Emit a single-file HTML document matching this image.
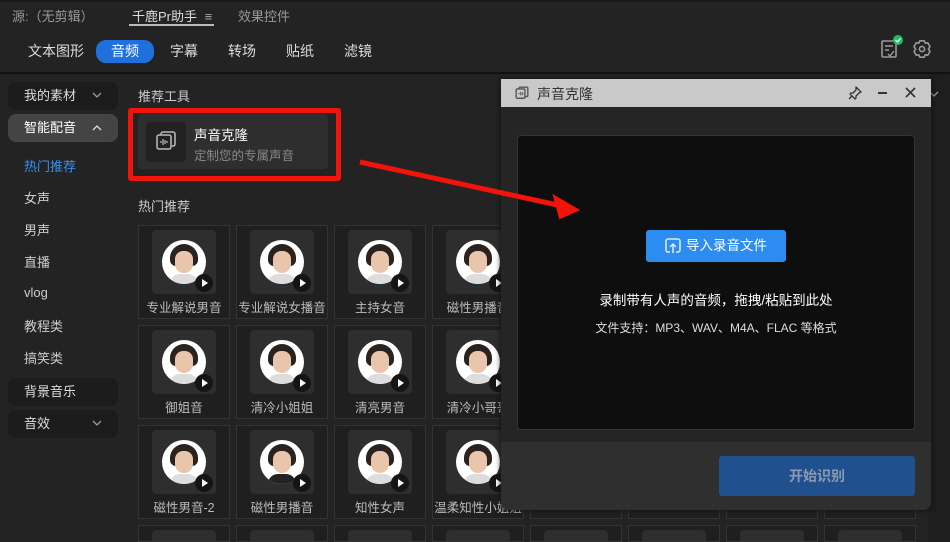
<!DOCTYPE html>
<html style="width:950px;height:542px;overflow:hidden"><head><meta charset="utf-8">
<style>
*{margin:0;padding:0;box-sizing:border-box}
body{width:950px;height:542px;background:#232323;font-family:"Liberation Sans","Noto Sans CJK SC",sans-serif;color:#ccc;position:relative;overflow:hidden;font-size:13px}
.a{position:absolute}
.tab{position:absolute;top:40px;height:23px;line-height:23px;font-size:14px;color:#ddd;text-align:center}
.side{position:absolute;left:8px;width:110px;height:28px;border-radius:8px;background:#1c1c1c;color:#ddd;font-size:13px;line-height:28px;padding-left:16px}
.side svg{position:absolute;right:16px;top:10px}
.si{position:absolute;left:24px;font-size:13px;color:#ccc}
.cell{position:absolute;width:92px;height:94px;border:1px solid #333;background:#1f1f1f}
.cell.cut{height:17px;overflow:hidden}
.cell .box{position:absolute;left:13px;top:4px;width:64px;height:64px;background:#2e2e2e;border-radius:4px}
.cell .av{position:absolute;left:10px;top:10px;width:44px;height:44px;border-radius:50%;background:#fff;overflow:hidden}
.cell .hair{position:absolute;left:8px;top:4px;width:28px;height:22px;border-radius:14px 14px 6px 6px;background:#2a221e}
.cell .face{position:absolute;left:13px;top:11px;width:18px;height:22px;border-radius:9px 9px 10px 10px;background:#e9c5ac}
.cell .body{position:absolute;left:8px;top:34px;width:28px;height:14px;border-radius:10px 10px 0 0;background:#ddd}
.cell .pl{position:absolute;left:43px;top:44px;width:18px;height:18px;border-radius:50%;background:#151515}
.cell .pl:after{content:"";position:absolute;left:7px;top:5px;border-left:6px solid #fff;border-top:4px solid transparent;border-bottom:4px solid transparent}
.cell .lb{position:absolute;left:-4px;right:-4px;top:71px;text-align:center;font-size:12.5px;color:#bbb;white-space:nowrap;overflow:hidden}
</style></head><body>
<div class="a" style="left:0;top:0;width:950px;height:2px;background:#1a1a1a"></div>
<div class="a" style="left:12px;top:6px;font-size:13px;color:#999">源:（无剪辑）</div>
<div class="a" style="left:132px;top:6px;font-size:13px;color:#ddd">千鹿Pr助手 <span style="color:#aaa;margin-left:4px">≡</span></div>
<div class="a" style="left:129px;top:24px;width:85px;height:2px;background:#bbb"></div>
<div class="a" style="left:238px;top:6px;font-size:13px;color:#999">效果控件</div>

<div class="tab" style="left:28px">文本图形</div>
<div class="tab" style="left:96px;width:58px;background:#1f6fdc;border-radius:10px;color:#fff">音频</div>
<div class="tab" style="left:170px">字幕</div>
<div class="tab" style="left:228px">转场</div>
<div class="tab" style="left:286px">贴纸</div>
<div class="tab" style="left:344px">滤镜</div>
<svg class="a" style="left:880px;top:34px" width="56" height="28" viewBox="0 0 56 28">
<rect x="2" y="7" width="14" height="16" rx="1" fill="none" stroke="#999" stroke-width="1.6"/>
<path d="M5 12h8M5 16h4M8 20l2 2 4-5" fill="none" stroke="#999" stroke-width="1.4"/>
<circle cx="18" cy="6" r="5" fill="#1fbf5f"/><path d="M15.5 6l2 2 3-3.5" stroke="#fff" stroke-width="1.3" fill="none"/>
<g transform="translate(42 15)" fill="none" stroke="#999" stroke-width="1.6" stroke-linejoin="round">
<path d="M-2.2 -8.2h4.4l1 2.4 2.6-.4 2.2 3.8-1.6 2.4 1.6 2.4-2.2 3.8-2.6-.4-1 2.4h-4.4l-1-2.4-2.6.4-2.2-3.8 1.6-2.4-1.6-2.4 2.2-3.8 2.6.4z"/>
<circle r="2.6"/></g>
</svg>
<div class="a" style="left:0;top:72px;width:950px;height:2px;background:#111"></div>

<div class="side" style="top:82px">我的素材<svg width="10" height="7" viewBox="0 0 10 7"><path d="M1 1l4 4 4-4" fill="none" stroke="#999" stroke-width="1.3"/></svg></div>
<div class="side" style="top:114px;background:#444;color:#fff">智能配音<svg width="10" height="7" viewBox="0 0 10 7"><path d="M1 6l4-4 4 4" fill="none" stroke="#ddd" stroke-width="1.3"/></svg></div>
<div class="si" style="top:156px;color:#3a8ef0">热门推荐</div>
<div class="si" style="top:188px">女声</div>
<div class="si" style="top:220px">男声</div>
<div class="si" style="top:252px">直播</div>
<div class="si" style="top:285px">vlog</div>
<div class="si" style="top:316px">教程类</div>
<div class="si" style="top:348px">搞笑类</div>
<div class="side" style="top:378px">背景音乐</div>
<div class="side" style="top:410px">音效<svg width="10" height="7" viewBox="0 0 10 7"><path d="M1 1l4 4 4-4" fill="none" stroke="#999" stroke-width="1.3"/></svg></div>

<div class="a" style="left:138px;top:86px;font-size:13px;color:#ccc">推荐工具</div>
<div class="a" style="left:138px;top:114px;width:190px;height:55px;background:#2e2e2e;border-radius:4px"></div>
<div class="a" style="left:146px;top:122px;width:40px;height:40px;background:#222;border-radius:4px"></div>
<svg class="a" style="left:154px;top:130px" width="24" height="24" viewBox="0 0 24 24"><rect x="3" y="5" width="14" height="14" rx="2" fill="none" stroke="#bbb" stroke-width="1.5"/><path d="M7 4.5V4a2 2 0 012-2h10a2 2 0 012 2v10a2 2 0 01-2 2h-1" fill="none" stroke="#bbb" stroke-width="1.5"/><path d="M7 11v2M9 9v6M11 10v4M13 11v2" stroke="#bbb" stroke-width="1.2"/></svg>
<div class="a" style="left:194px;top:124px;font-size:13.5px;color:#fff">声音克隆</div>
<div class="a" style="left:194px;top:145px;font-size:12.5px;color:#888">定制您的专属声音</div>
<div class="a" style="left:128px;top:108px;width:213px;height:73px;border:5px solid #f0140a;border-radius:3px"></div>

<div class="a" style="left:138px;top:196px;font-size:13px;color:#ccc">热门推荐</div>

<div class="cell" style="left:138px;top:225px"><div class="box"><div class="av"><div class="hair"></div><div class="face"></div><div class="body"></div></div><div class="pl"></div></div><div class="lb">专业解说男音</div></div>
<div class="cell" style="left:236px;top:225px"><div class="box"><div class="av"><div class="hair"></div><div class="face"></div><div class="body"></div></div><div class="pl"></div></div><div class="lb">专业解说女播音</div></div>
<div class="cell" style="left:334px;top:225px"><div class="box"><div class="av"><div class="hair"></div><div class="face"></div><div class="body"></div></div><div class="pl"></div></div><div class="lb">主持女音</div></div>
<div class="cell" style="left:432px;top:225px"><div class="box"><div class="av"><div class="hair"></div><div class="face"></div><div class="body"></div></div><div class="pl"></div></div><div class="lb">磁性男播音</div></div>
<div class="cell" style="left:138px;top:325px"><div class="box"><div class="av"><div class="hair"></div><div class="face"></div><div class="body"></div></div><div class="pl"></div></div><div class="lb">御姐音</div></div>
<div class="cell" style="left:236px;top:325px"><div class="box"><div class="av"><div class="hair"></div><div class="face"></div><div class="body"></div></div><div class="pl"></div></div><div class="lb">清冷小姐姐</div></div>
<div class="cell" style="left:334px;top:325px"><div class="box"><div class="av"><div class="hair"></div><div class="face"></div><div class="body"></div></div><div class="pl"></div></div><div class="lb">清亮男音</div></div>
<div class="cell" style="left:432px;top:325px"><div class="box"><div class="av"><div class="hair"></div><div class="face"></div><div class="body"></div></div><div class="pl"></div></div><div class="lb">清冷小哥哥</div></div>
<div class="cell" style="left:138px;top:425px"><div class="box"><div class="av"><div class="hair"></div><div class="face"></div><div class="body"></div></div><div class="pl"></div></div><div class="lb">磁性男音-2</div></div>
<div class="cell" style="left:236px;top:425px"><div class="box"><div class="av"><div class="hair"></div><div class="face"></div><div class="body" style="background:#222"></div></div><div class="pl"></div></div><div class="lb">磁性男播音</div></div>
<div class="cell" style="left:334px;top:425px"><div class="box"><div class="av"><div class="hair"></div><div class="face"></div><div class="body"></div></div><div class="pl"></div></div><div class="lb">知性女声</div></div>
<div class="cell" style="left:432px;top:425px"><div class="box"><div class="av"><div class="hair"></div><div class="face"></div><div class="body"></div></div><div class="pl"></div></div><div class="lb">温柔知性小姐姐</div></div>
<div class="cell" style="left:530px;top:425px"></div><div class="cell" style="left:628px;top:425px"></div><div class="cell" style="left:726px;top:425px"></div><div class="cell" style="left:824px;top:425px"></div>
<div class="cell cut" style="left:138px;top:525px"><div class="box"></div></div>
<div class="cell cut" style="left:236px;top:525px"><div class="box"></div></div>
<div class="cell cut" style="left:334px;top:525px"><div class="box"></div></div>
<div class="cell cut" style="left:432px;top:525px"><div class="box"></div></div>
<div class="cell cut" style="left:530px;top:525px"><div class="box"></div></div>
<div class="cell cut" style="left:628px;top:525px"><div class="box"></div></div>
<div class="cell cut" style="left:726px;top:525px"><div class="box"></div></div>
<div class="cell cut" style="left:824px;top:525px"><div class="box"></div></div>
<div class="a" style="left:928px;top:74px;width:22px;height:468px;background:#1e1e1e"></div>
<svg class="a" style="left:929px;top:91px" width="10" height="7" viewBox="0 0 10 7"><path d="M1 1l4 4 4-4" fill="none" stroke="#999" stroke-width="1.3"/></svg>

<!-- dialog -->
<div class="a" style="left:501px;top:79px;width:430px;height:431px;background:#252525;border-radius:0 0 8px 8px;overflow:hidden;box-shadow:0 0 6px #111">
  <div class="a" style="left:0;top:0;width:430px;height:28px;background:#c9c9c9"></div>
  <svg class="a" style="left:14px;top:7px" width="14" height="14" viewBox="0 0 24 24"><rect x="2" y="5" width="15" height="16" rx="2" fill="none" stroke="#555" stroke-width="2.4"/><path d="M7 5V4a2 2 0 012-2h11a2 2 0 012 2v12a2 2 0 01-2 2h-3" fill="none" stroke="#555" stroke-width="2.4"/><path d="M7 12v2M10 10v6M13 11v4" stroke="#555" stroke-width="2"/></svg>
  <div class="a" style="left:36px;top:5px;font-size:14px;color:#333">声音克隆</div>
  <svg class="a" style="left:346px;top:6px" width="16" height="16" viewBox="0 0 16 16"><path d="M9 2l5 5-2 1-3 3 0 2-1 1-5-5 1-1h2l3-3z M5 11l-3 3" fill="none" stroke="#333" stroke-width="1.3" stroke-linejoin="round"/></svg>
  <div class="a" style="left:377px;top:13px;width:9px;height:2px;background:#333"></div>
  <svg class="a" style="left:404px;top:8px" width="11" height="11" viewBox="0 0 11 11"><path d="M1 1l9 9M10 1l-9 9" stroke="#333" stroke-width="1.6"/></svg>
  <div class="a" style="left:16px;top:56px;width:398px;height:295px;background:#0e0e0e;border:1px solid #333;border-radius:4px"></div>
  <div class="a" style="left:145px;top:151px;width:140px;height:32px;background:#2d8cf0;border-radius:3px;color:#fff;font-size:13.5px;line-height:32px;padding-left:40px">导入录音文件</div>
  <svg class="a" style="left:163px;top:158px" width="18" height="18" viewBox="0 0 18 18"><path d="M6 15H4a2 2 0 01-2-2V4a2 2 0 012-2h10a2 2 0 012 2v9a2 2 0 01-2 2h-2" fill="none" stroke="#dfeeff" stroke-width="1.5"/><path d="M9 16V7M6 10l3-3 3 3" fill="none" stroke="#dfeeff" stroke-width="1.5"/></svg>
  <div class="a" style="left:0;width:430px;top:210px;text-align:center;font-size:13.5px;color:#fff">录制带有人声的音频，拖拽/粘贴到此处</div>
  <div class="a" style="left:0;width:430px;top:240px;text-align:center;font-size:12px;color:#ddd">文件支持：MP3、WAV、M4A、FLAC 等格式</div>
  <div class="a" style="left:0;top:363px;width:430px;height:68px;background:#2f2f2f"></div>
  <div class="a" style="left:218px;top:377px;width:196px;height:40px;background:#20508e;border-radius:3px;color:#8a9ab0;font-size:14px;font-weight:bold;line-height:40px;text-align:center">开始识别</div>
</div>

<svg class="a" style="left:0;top:0" width="950" height="542"><path d="M360 162L562 206" stroke="#f0140a" stroke-width="5"/><path d="M578 210L554 196L560 218Z" fill="#f0140a" stroke="#f0140a" stroke-width="2"/></svg>
</body></html>
